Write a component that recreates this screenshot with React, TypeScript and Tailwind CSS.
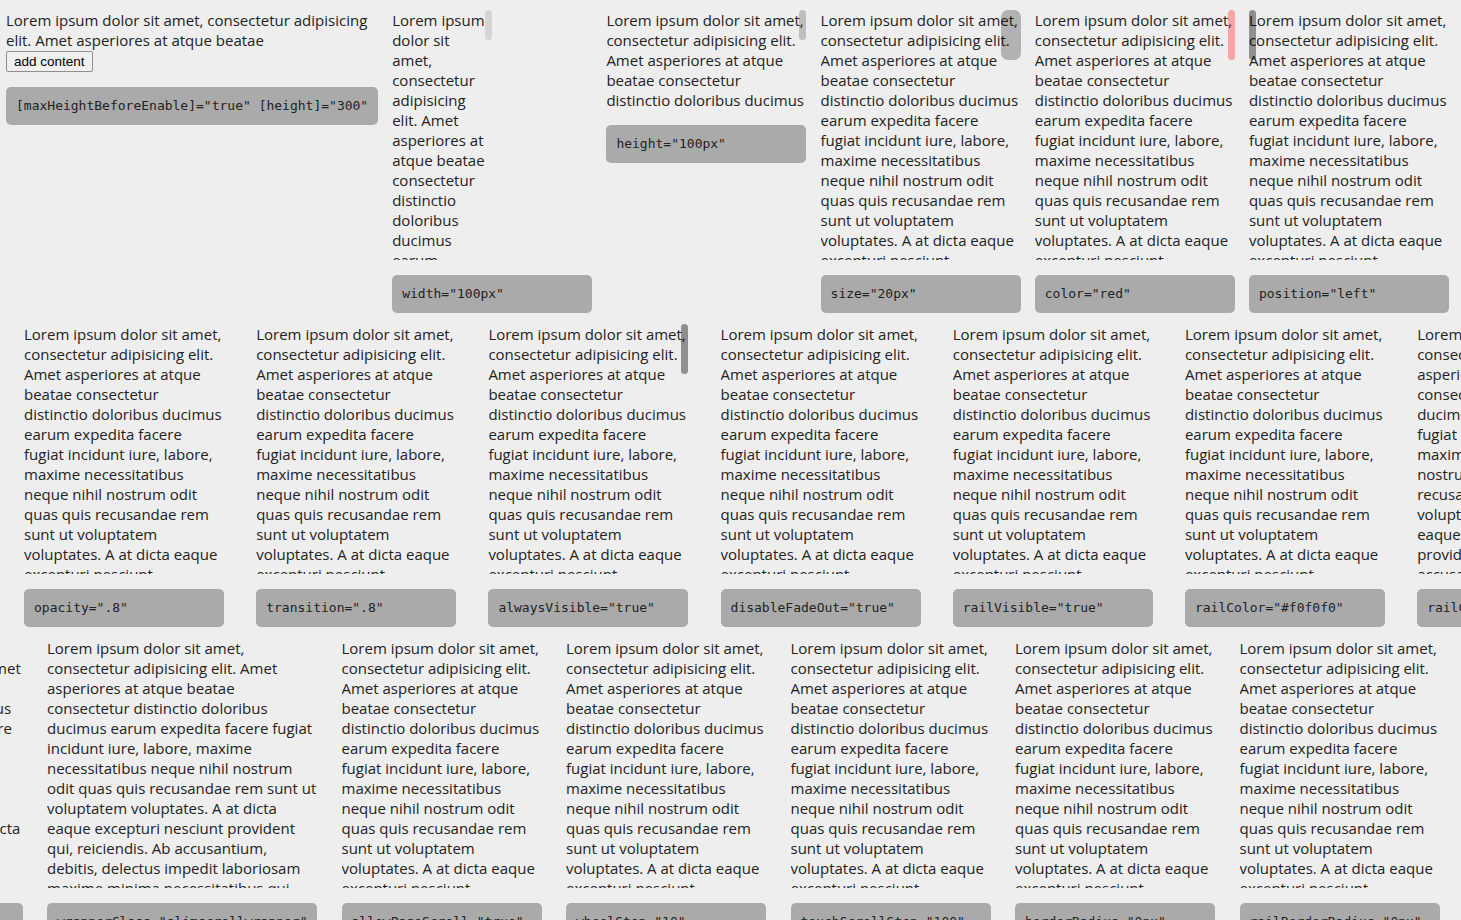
import type { ReactNode } from "react";

const LOREM =
  "Lorem ipsum dolor sit amet, consectetur adipisicing elit. Amet asperiores at atque beatae consectetur distinctio doloribus ducimus earum expedita facere fugiat incidunt iure, labore, maxime necessitatibus neque nihil nostrum odit quas quis recusandae rem sunt ut voluptatem voluptates. A at dicta eaque excepturi nesciunt provident qui, reiciendis. Ab accusantium, debitis, delectus impedit laboriosam maxime minima necessitatibus qui, quod repellendus sit tempora voluptas. Consequatur dolorum enim est facilis fugit minus, nobis odio perferendis quaerat quam quidem ratione reiciendis sed sequi veritatis.";

function Code({ children }: { children: ReactNode }) {
  return (
    <div className="mt-[15px] rounded-[5px] bg-[#aaaaaa] px-[10px] py-[10px] font-['DejaVu_Sans_Mono',monospace] text-[13px] leading-[18px] whitespace-nowrap text-[#222]">
      {children}
    </div>
  );
}

interface DemoProps {
  width?: string;
  boxWidth?: string;
  box?: string;
  bar?: string;
  label: string;
}

function Demo({
  width = "w-[200px]",
  boxWidth = "w-[200px]",
  box = "h-[250px]",
  bar,
  label,
}: DemoProps) {
  return (
    <div className={`shrink-0 ${width}`}>
      <div className={`relative overflow-hidden ${boxWidth} ${box}`}>
        <p>{LOREM}</p>
        {bar && <div className={`absolute top-0 rounded-[7px] ${bar}`} />}
      </div>
      <Code>{label}</Code>
    </div>
  );
}

export default function App() {
  return (
    <div className="h-[920px] w-full overflow-hidden bg-[#eeeeee] font-['Open_Sans',sans-serif] text-[15px] leading-[20px] text-[#222]">
      {/* row 1 */}
      <div className="flex items-start gap-[14.2px] pt-[10px] pl-[6px]">
        <div className="w-[372px] shrink-0">
          <p>
            Lorem ipsum dolor sit amet, consectetur adipisicing elit. Amet
            asperiores at atque beatae
          </p>
          <button className="mt-[1px] block rounded-[2px] border border-[#8f8f8f] bg-[#f0f0f0] px-[7px] py-[1px] font-['Liberation_Sans',sans-serif] text-[13.5px] leading-[17px] text-black">
            add content
          </button>
          <Code>[maxHeightBeforeEnable]="true" [height]="300"</Code>
        </div>
        <Demo
          boxWidth="w-[100px]"
          bar="right-0 w-[7px] h-[30px] bg-black/10"
          label='width="100px"'
        />
        <Demo
          box="h-[100px]"
          bar="right-0 w-[7px] h-[30px] bg-black/20"
          label='height="100px"'
        />
        <Demo
          bar="right-0 w-[20px] h-[50px] bg-black/25"
          label='size="20px"'
        />
        <Demo
          bar="right-0 w-[7px] h-[50px] bg-[#ff0000]/30"
          label='color="red"'
        />
        <Demo
          bar="left-0 w-[7px] h-[50px] bg-black/40"
          label='position="left"'
        />
      </div>

      {/* row 2 */}
      <div className="mt-[11px] flex items-start gap-[32.2px] pl-[24px]">
        <Demo label='opacity=".8"' />
        <Demo label='transition=".8"' />
        <Demo
          bar="right-0 w-[7px] h-[50px] bg-black/40"
          label='alwaysVisible="true"'
        />
        <Demo label='disableFadeOut="true"' />
        <Demo label='railVisible="true"' />
        <Demo label='railColor="#f0f0f0"' />
        <Demo
          width="w-[244px]"
          boxWidth="w-[244px]"
          label='railClass="slimscrollrail"'
        />
      </div>

      {/* row 3 */}
      <div className="mt-[11px] -ml-[209.5px] flex items-start gap-[24.5px]">
        <Demo
          width="w-[232px]"
          boxWidth="w-[232px]"
          label='barClass="slimscrollbar"'
        />
        <Demo
          width="w-[270px]"
          boxWidth="w-[270px]"
          label='wrapperClass="slimscrollwrapper"'
        />
        <Demo label='allowPageScroll="true"' />
        <Demo label='wheelStep="10"' />
        <Demo label='touchScrollStep="100"' />
        <Demo label='borderRadius="0px"' />
        <Demo label='railBorderRadius="0px"' />
      </div>
    </div>
  );
}
